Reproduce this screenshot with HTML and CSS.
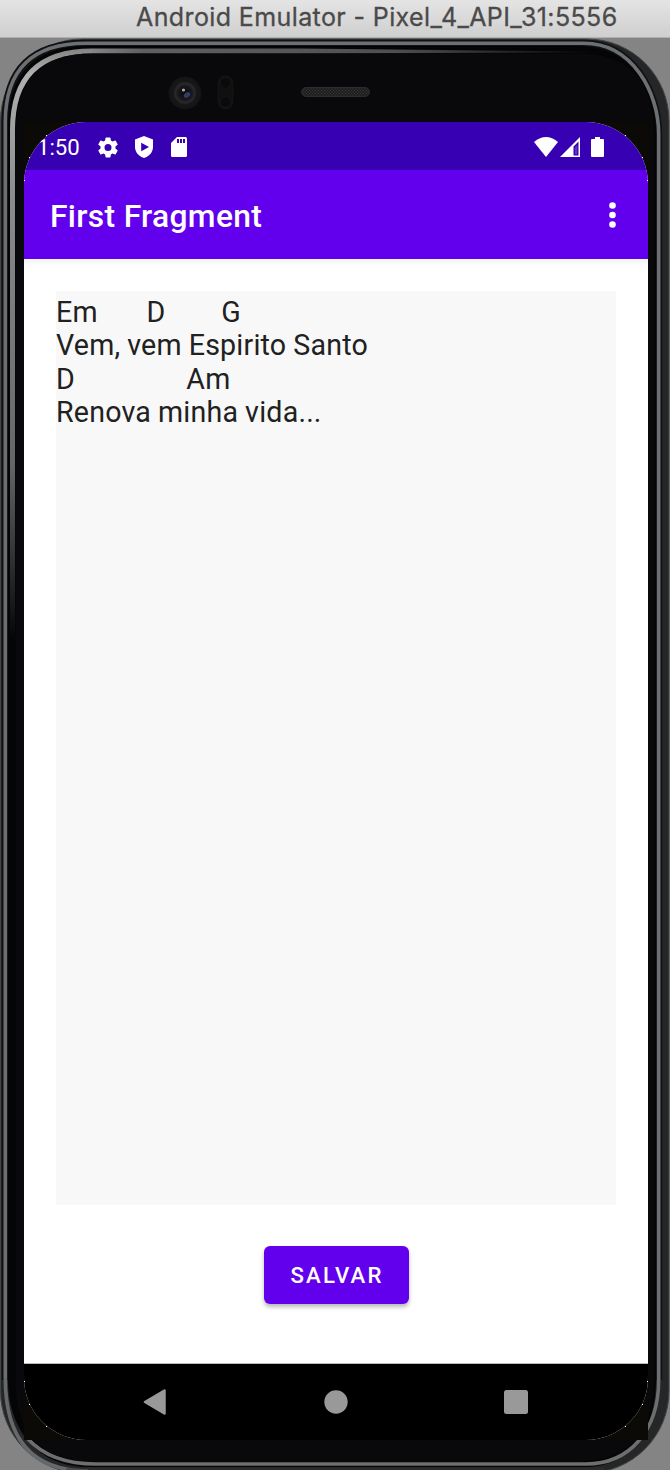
FILE: index.html
```html
<!DOCTYPE html>
<html lang="pt">
<head>
<meta charset="utf-8">
<title>Android Emulator</title>
<link rel="stylesheet" href="styles.css">
</head>
<body>
<header class="window-title"><span class="window-name">Android Emulator - Pixel_4_API_31:5556</span></header>
<main class="device">
  <svg class="chassis" viewBox="0 38 670 1432" width="670" height="1432" fill="none" aria-hidden="true">
    <defs>
      <linearGradient id="gleam" gradientUnits="userSpaceOnUse" x1="0" y1="50" x2="0" y2="640">
        <stop offset="0" stop-color="#858585"/><stop offset=".04" stop-color="#b0b0b0"/><stop offset=".25" stop-color="#8c8c8c"/><stop offset=".7" stop-color="#666"/><stop offset="1" stop-color="#050506"/>
      </linearGradient>
      <linearGradient id="topgleam" gradientUnits="userSpaceOnUse" x1="92" y1="0" x2="590" y2="0">
        <stop offset="0" stop-color="#858585"/><stop offset=".1" stop-color="#606060"/><stop offset=".6" stop-color="#505050"/><stop offset="1" stop-color="#080809"/>
      </linearGradient>
      <radialGradient id="lens"><stop offset="0" stop-color="#08080b"/><stop offset=".4" stop-color="#18181c"/><stop offset=".58" stop-color="#2a2a2d"/><stop offset=".68" stop-color="#171717"/><stop offset=".9" stop-color="#151515"/><stop offset="1" stop-color="#0a0a0b"/></radialGradient>
      <pattern id="mesh" width="3" height="3" patternUnits="userSpaceOnUse"><rect width="3" height="3" fill="#1f1f1f"/><path d="M0 0h1v1H0zM1.500 1.500h1v1h-1z" fill="#383838"/></pattern>
    </defs>
    <rect x=".5" y="39" width="668.5" height="1434" rx="82" fill="#252627" stroke="#444"/>
    <path d="M5.300 1380V122Q5.300 43.300 86 43.300H584C632 43.300 658.700 92 658.700 134V1380" stroke="#111" stroke-width="7"/>
    <path d="M5.300 1378V122Q5.300 43.300 86 43.300H584C632 43.300 658.700 92 658.700 134V1380" stroke="#6c6f73" stroke-width="3.600"/>
    <path d="M5.300 1378Q5.300 1471 88 1471" stroke="#66696c" stroke-width="3.600"/>
    <path d="M8 1380V126Q8 46 88 46H580C632 46 656 92 656 134V1380C656 1430 630 1467 586 1467H88C38 1467 8 1430 8 1380Z" fill="#050506"/>
    <path d="M12.500 640V130Q12.500 51 92 51" stroke="url(#gleam)" stroke-width="5"/>
    <path d="M91.500 48.500H300L590 51.500V52.500L300 53.500H91.500Z" fill="url(#topgleam)"/>
    <path d="M15.500 1380V134Q15.500 53.500 92 53.500H578Q654 53.500 654 134V1380Q654 1461 578 1461H92Q15.500 1461 15.500 1380Z" fill="#09090b"/>
    <path d="M28 1439Q51 1464 96 1464H586C630 1464 658.700 1430 658.700 1380" stroke="#6e6e6e" stroke-width="3.500"/>
    <path d="M66 1469H604" stroke="#333" stroke-width="1.200"/>
    <circle cx="185" cy="93" r="17" fill="url(#lens)"/>
    <ellipse cx="187" cy="95" rx="3.500" ry="2.500" fill="#303c64" transform="rotate(-35 187 95)"/>
    <circle cx="183.500" cy="90" r="1.600" fill="#aaa"/>
    <rect x="218" y="76" width="15" height="33" rx="7.500" fill="#101011" stroke="#151516"/>
    <circle cx="225.500" cy="83" r="5.500" fill="#0a0a0b" stroke="#171717"/>
    <circle cx="225.500" cy="102" r="5.500" fill="#0a0a0b" stroke="#171717"/>
    <rect x="301.500" y="87.500" width="68" height="9" rx="4.500" fill="url(#mesh)" stroke="#2c2c2c"/>
    <path d="M24 122h624v1318H24z" fill="#0b0a07"/>
  </svg>
  <section class="screen">
    <div class="status">
      <span class="clock">1:50</span>
      <svg class="gear" viewBox="2 2 20 20" width="20" height="21" fill="#fff"><path d="M19.430 12.980a7.800 7.800 0 0 0 0-1.960l2.110-1.650a.5.5 0 0 0 .12-.64l-2-3.460a.5.5 0 0 0-.61-.22l-2.490 1a7.300 7.300 0 0 0-1.690-.98l-.38-2.650A.5.5 0 0 0 14 2h-4a.5.5 0 0 0-.49.420l-.38 2.650c-.61.25-1.170.59-1.690.98l-2.490-1a.5.5 0 0 0-.61.22l-2 3.460a.5.5 0 0 0 .12.640l2.110 1.650a7.900 7.900 0 0 0 0 1.960l-2.110 1.650a.5.5 0 0 0-.12.640l2 3.460c.12.220.39.300.61.220l2.490-1c.52.400 1.080.73 1.690.98l.38 2.650c.03.240.24.420.49.420h4c.25 0 .46-.18.490-.42l.38-2.650c.61-.25 1.170-.59 1.690-.98l2.490 1c.23.090.49 0 .61-.22l2-3.460a.5.5 0 0 0-.12-.64zM12 15.500a3.500 3.500 0 1 1 0-7 3.500 3.500 0 0 1 0 7z"/></svg>
      <svg class="shield" viewBox="0 0 18 22" width="18" height="22"><path fill="#fff" d="M9 0 18 3.500V11c0 5-3.500 9.300-9 11-5.500-1.700-9-6-9-11V3.500z"/><path fill="#3700b3" d="M6.200 6.700v8.600L14 11z"/></svg>
      <svg class="card" viewBox="0 0 16 20" width="16" height="20"><path fill="#fff" d="M6 0h8.500Q16 0 16 1.500v17q0 1.500-1.500 1.500h-13Q0 20 0 18.500V6z"/><path fill="#3700b3" d="M6 2h2v4H6zM9 2h2v4H9zM12 2h2v4h-2z"/></svg>
      <span class="grow"></span>
      <svg class="wifi" viewBox="0 0 24 20" width="24" height="20"><path fill="#fff" d="M0 5Q12-5 24 5L12 20z"/></svg>
      <svg class="signal" viewBox="0 0 20 20" width="20" height="20"><path fill="#fff" fill-rule="evenodd" d="M20 0v20H0zM18.500 4.500 13.500 9.500V18.500h5z"/><path fill="#fff" d="M14.800 10.500 17.300 8v9.200H14.800z" opacity=".2"/></svg>
      <svg class="battery" viewBox="0 0 13 20" width="13" height="20"><path fill="#fff" d="M4 0h5v2h3Q13 2 13 3v16q0 1-1 1h-11Q0 20 0 19v-16Q0 2 1 2H4z"/></svg>
    </div>
    <div class="appbar">
      <h1 class="title">First Fragment</h1>
      <svg class="more" viewBox="0 0 7 26" width="7" height="26" fill="#fff"><circle cx="3.500" cy="3.500" r="3.300"/><circle cx="3.500" cy="13" r="3.300"/><circle cx="3.500" cy="22.500" r="3.300"/></svg>
    </div>
    <div class="content">
      <div class="lyrics">Em       D        G
Vem, vem Espirito Santo
D                Am
Renova minha vida...</div>
      <button class="save">SALVAR</button>
    </div>
    <nav class="nav">
      <svg viewBox="0 0 24 26" width="24" height="26"><path d="M21.500 1.500v23L2 13z" fill="#999" stroke="#999" stroke-width="2.500" stroke-linejoin="round"/></svg>
      <svg viewBox="0 0 24 24" width="24" height="24"><circle cx="12" cy="12" r="11.700" fill="#999"/></svg>
      <svg viewBox="0 0 24 24" width="24" height="24"><rect width="24" height="24" rx="2.500" fill="#999"/></svg>
    </nav>
  </section>
  <svg class="sparks" viewBox="0 38 670 1432" width="670" height="1432" fill="#fff" aria-hidden="true"><path d="M29 157h1v1h-1zM46 135h1v1h-1zM24 180h1v1h-1zM625 135h1v1h-1zM642 157h1v1h-1zM647 180h1v1h-1zM24 1381h1v1h-1zM29 1404h1v1h-1zM46 1426h1v1h-1zM647 1381h1v1h-1zM642 1404h1v1h-1zM625 1426h1v1h-1z"/></svg>
</main>
</body>
</html>
```
FILE: styles.css
```css
* { box-sizing: border-box; }
body { margin: 0; width: 670px; height: 1470px; overflow: hidden; background: #848484; font-family: Roboto, sans-serif; display: flex; flex-direction: column; }
svg { display: block; flex: none; }
.window-title { height: 38px; flex: none; background: linear-gradient(#e4e4e4, #cfcfcf); border-bottom: 1px solid #b0b0b0; padding-left: 136px; color: #4a4a4a; font: 25px/34px Inter, sans-serif; white-space: nowrap; }
.window-name { letter-spacing: .39px; -webkit-text-stroke: .3px #4a4a4a; }
.device { position: relative; height: 1432px; padding: 84px 22px 30px 24px; }
.chassis, .sparks { position: absolute; left: 0; top: 0; }
.screen { position: relative; width: 624px; height: 1318px; border-radius: 62px; overflow: hidden; background: #fff; display: flex; flex-direction: column; }
.status { height: 48px; flex: none; display: flex; align-items: center; padding: 2px 44px 0 13px; background: #3700b3; color: #fff; }
.clock { font-size: 22.2px; width: 61px; }
.shield { margin-left: 17px; }
.card { margin-left: 18px; }
.grow { flex: 1; }
.signal { margin-left: 2px; }
.battery { margin-left: 11px; }
.appbar { height: 89px; flex: none; display: flex; align-items: center; justify-content: space-between; padding: 1px 32px 0 26px; background: #6200ee; color: #fff; }
.title { margin: 0; font-size: 31.8px; font-weight: 500; padding-top: 1px; letter-spacing: .32px; }
.content { flex: 1; background: linear-gradient(#f3f3f3, #fff 7px); padding: 32px; display: flex; flex-direction: column; align-items: center; }
.lyrics { width: 560px; height: 914px; flex: none; background: #f8f8f8; padding-top: 4.5px; font-size: 28.6px; line-height: 33.5px; letter-spacing: .2px; word-spacing: -.33px; color: #212121; white-space: pre; }
.save { margin-top: 41px; width: 145px; height: 58px; flex: none; border: 0; border-radius: 6px; background: #6200ee; color: #fff; font: 500 22.2px Roboto, sans-serif; letter-spacing: 2.1px; padding: 0 0 0 2px; box-shadow: 0 3px 4px rgba(0, 0, 0, .28); }
.nav { height: 77px; flex: none; border-top: 1px solid #bbb; background: #000; display: flex; align-items: center; justify-content: space-between; padding: 0 120px 0 119px; }
```
